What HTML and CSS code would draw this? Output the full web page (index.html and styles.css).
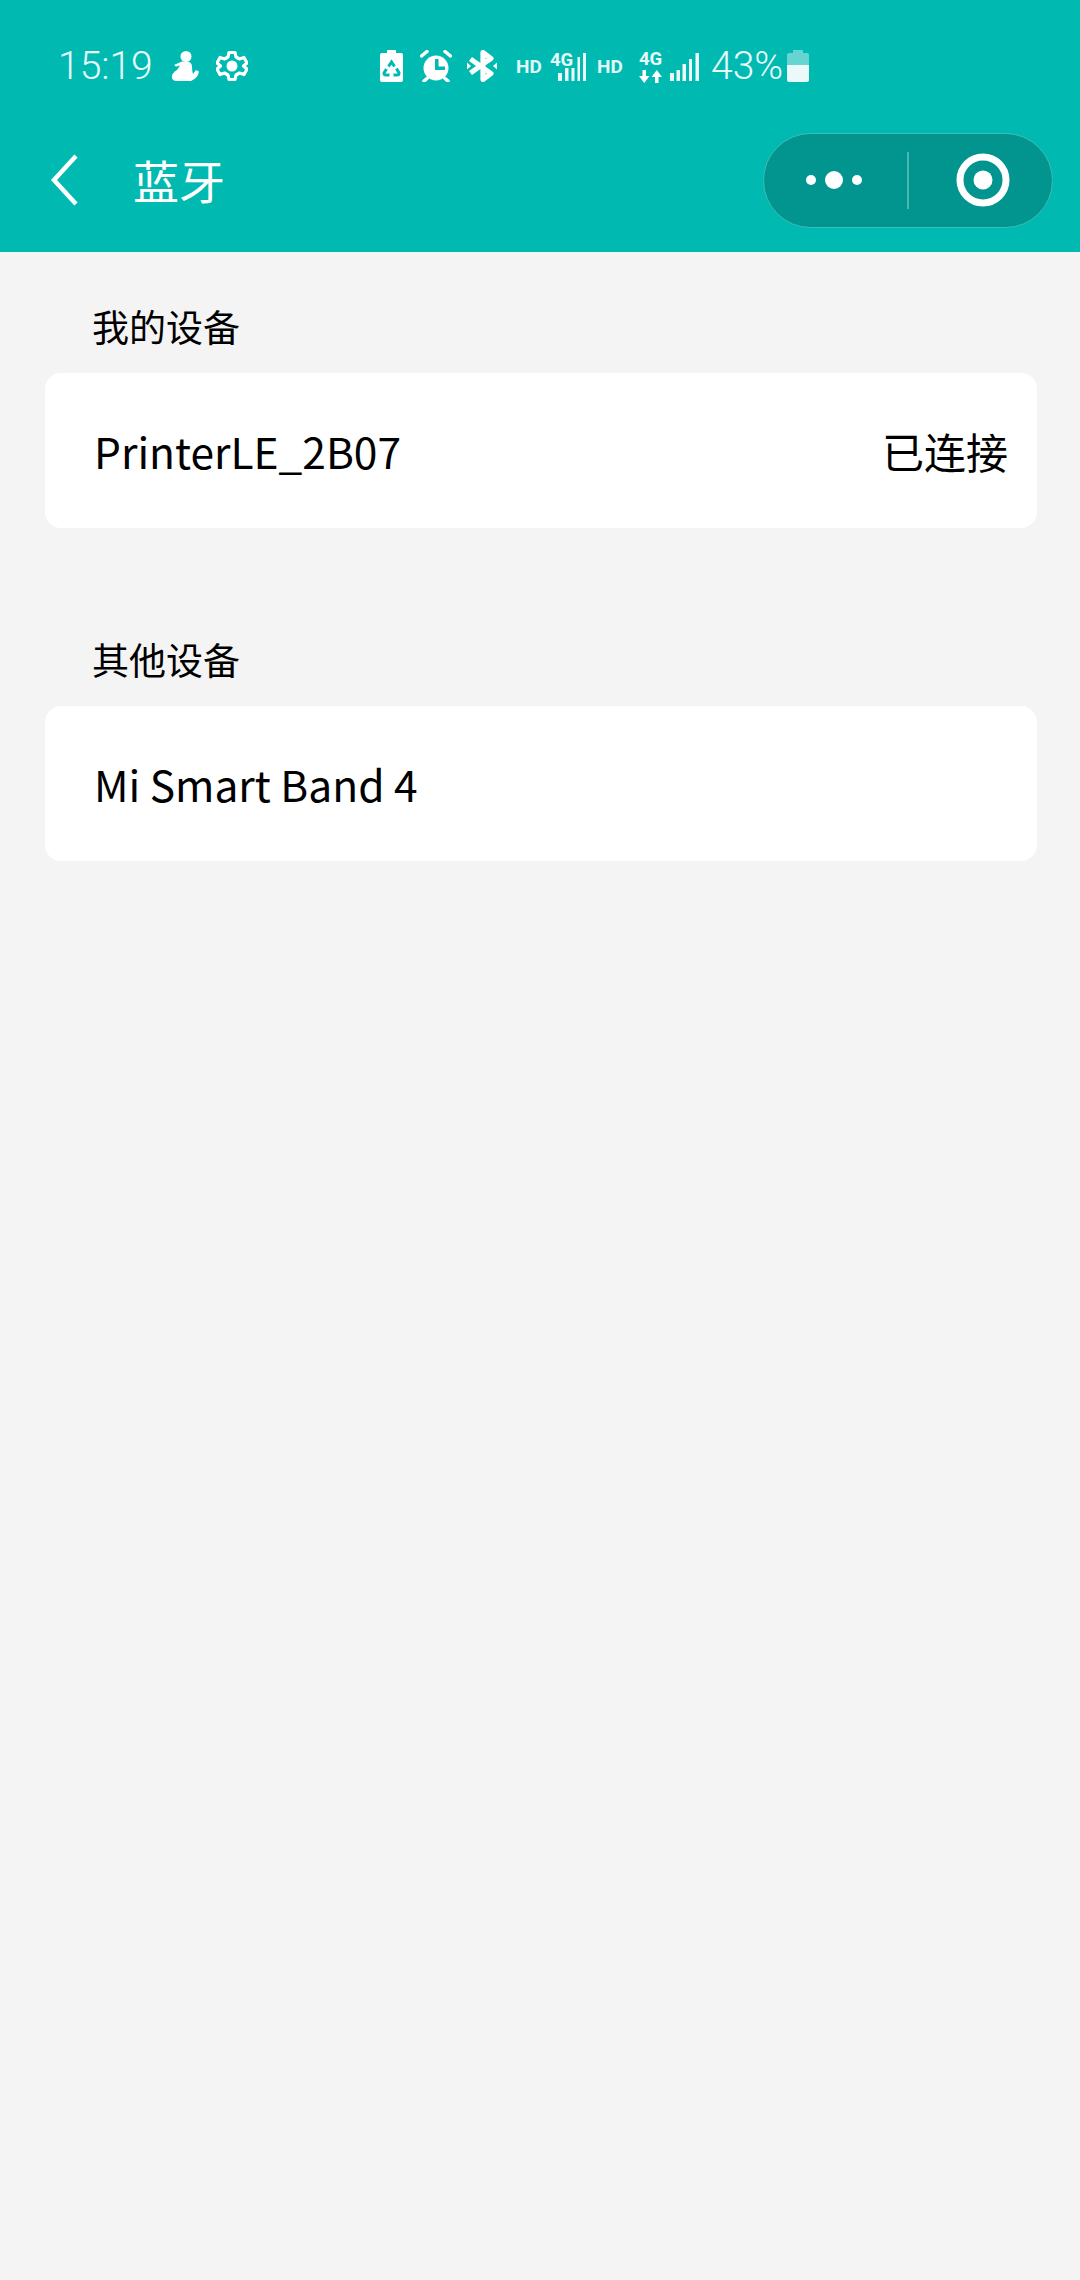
FILE: index.html
```html
<!DOCTYPE html>
<html lang="zh-CN">
<head>
<meta charset="UTF-8" />
<meta name="viewport" content="width=device-width, initial-scale=1.0"/>
<title>蓝牙</title>
<link rel="stylesheet" href="styles.css">
</head>
<body>

<header class="topbar">
  <div class="status">
    <span class="time">15:19</span>
    <!-- meditation figure -->
    <svg class="ic ic-zen" width="28" height="32" viewBox="0 0 28 32">
      <circle cx="15" cy="6.500" r="5.500" fill="#fff"/>
      <path d="M3 15 L11 11.500 L18 12 Q21 13 21 17 Q21 21 22 24 L25 20 L28 21.500 Q27 28 20 31 L6 31 Q0 31 1 25 Q2 22 6 20 L9 15.500 L5 16.500 Z" fill="#fff"/>
    </svg>
    <!-- settings gear -->
    <svg class="ic ic-gear" width="32" height="32" viewBox="0 0 32 32" fill="none" stroke="#fff">
      <path stroke-width="3.200" stroke-linejoin="round" d="M13 2.500 H19 L20 7 L23.500 9 L28 7.500 L31 13 L27.500 16 L31 19 L28 24.500 L23.500 23 L20 25 L19 29.500 H13 L12 25 L8.500 23 L4 24.500 L1 19 L4.500 16 L1 13 L4 7.500 L8.500 9 L12 7 Z"/>
      <circle cx="16" cy="16" r="5.500" fill="#fff" stroke="none"/>
    </svg>

    <!-- battery saver with recycle arrows -->
    <svg class="ic ic-saver" width="23" height="32" viewBox="0 0 23 32">
      <path d="M7 0 H16 V3 H21 Q23 3 23 5 V30 Q23 32 21 32 H2 Q0 32 0 30 V5 Q0 3 2 3 H7 Z" fill="#fff"/>
      <path d="M8.500 16.500 L11.500 12 L14.500 16.500 M16.500 18.500 L19 23 Q19 25 17 25 H13.500 M9.500 25 H6 Q4 25 4 23 L6.500 19" fill="none" stroke="#00bab2" stroke-width="3"/>
    </svg>
    <!-- alarm clock -->
    <svg class="ic ic-alarm" width="32" height="32" viewBox="0 0 32 32">
      <circle cx="16" cy="18" r="12.500" fill="#fff"/>
      <path d="M15 9 H18.500 V16.500 H25 V20 H15 Z" fill="#00bab2"/>
      <path d="M1.500 6 L7 1.500 M30.500 6 L25 1.500 M7.500 28 L4 31 M24.500 28 L28 31" stroke="#fff" stroke-width="3.500" stroke-linecap="round"/>
    </svg>
    <!-- bluetooth -->
    <svg class="ic ic-bt" width="30" height="32" viewBox="0 0 30 32" fill="none">
      <path d="M3.500 9 L24 23.500 L16 29.500 V2.500 L24 8.500 L3.500 23" stroke="#fff" stroke-width="5.200" stroke-linejoin="round"/>
      <path d="M0 12.500 L4 16 L0 19.500 Z M30 12.500 L26 16 L30 19.500 Z" fill="#fff"/>
    </svg>

    <span class="hd hd-first">HD</span>
    <span class="net net-first">
      <span class="net-g">4G</span>
      <svg class="bars" width="28" height="28" viewBox="0 0 28 28">
        <path d="M0 20 H4 V28 H0 Z M7 15 H10.500 V28 H7 Z M13.500 15 H16.500 V28 H13.500 Z M19.500 4 H22 V28 H19.500 Z M25 0 H28 V28 H25 Z" fill="#fff" fill-opacity="0.92"/>
      </svg>
    </span>
    <span class="hd hd-second">HD</span>
    <span class="net net-second">
      <span class="arrows">
        <span class="net-g">4G</span>
        <svg width="23" height="13" viewBox="0 0 23 13">
          <path d="M3.500 0 H7 V6 H10.500 L5.250 13 L0 6 H3.500 Z M16 13 H19.500 V7 H23 L17.750 0 L12.500 7 H16 Z" fill="#fff"/>
        </svg>
      </span>
      <svg class="bars" width="29" height="28" viewBox="0 0 29 28">
        <path d="M0 20 H4 V28 H0 Z M6.500 17 H10 V28 H6.500 Z M12.500 11 H16 V28 H12.500 Z M19 6 H22 V28 H19 Z M25.500 0 H29 V28 H25.500 Z" fill="#fff" fill-opacity="0.92"/>
      </svg>
    </span>
    <span class="pct">43%</span>
    <!-- battery level, upper part dimmed -->
    <svg class="ic ic-batt" width="22" height="32" viewBox="0 0 22 32">
      <path d="M6 0 H16 V3 H20 Q22 3 22 5 V15 H0 V5 Q0 3 2 3 H6 Z" fill="#fff" fill-opacity="0.4"/>
      <path d="M0 15 H22 V30 Q22 32 20 32 H2 Q0 32 0 30 Z" fill="#fff" fill-opacity="0.92"/>
    </svg>
  </div>

  <div class="nav">
    <svg class="back" width="30" height="54" viewBox="0 0 30 54" fill="none">
      <path d="M26 3 L4 27 L26 51" stroke="#fff" stroke-width="4.500"/>
    </svg>
    <h1 class="title">蓝牙</h1>
    <div class="capsule">
      <svg class="more" width="60" height="20" viewBox="0 0 60 20">
        <circle cx="5" cy="10" r="5" fill="#fff"/>
        <circle cx="28" cy="10" r="9" fill="#fff"/>
        <circle cx="51" cy="10" r="5" fill="#fff"/>
      </svg>
      <span class="sep"></span>
      <svg class="close" width="54" height="54" viewBox="0 0 54 54">
        <circle cx="27" cy="27" r="23" fill="none" stroke="#fff" stroke-width="7"/>
        <circle cx="27" cy="27" r="9.500" fill="#fff"/>
      </svg>
    </div>
  </div>
</header>

<main>
  <section class="group">
    <h2 class="group-title">我的设备</h2>
    <div class="device">
      <span class="device-name">PrinterLE_2B07</span>
      <span class="device-state">已连接</span>
    </div>
  </section>

  <section class="group">
    <h2 class="group-title">其他设备</h2>
    <div class="device">
      <span class="device-name">Mi Smart Band 4</span>
    </div>
  </section>
</main>

</body>
</html>
```

FILE: styles.css
```css
html, body {
  margin: 0;
  padding: 0;
}

body {
  width: 1080px;
  height: 2280px;
  overflow: hidden;
  background: #f4f4f4;
  color: #000;
  font-family: "Noto Sans CJK SC", "Noto Sans", sans-serif;
}

.topbar {
  height: 252px;
  background: #00bab2;
  color: #fff;
}

/* status bar */
.status {
  display: flex;
  align-items: center;
  height: 132px;
  padding-left: 58px;
}

.time {
  width: 96px;
  font-family: Roboto, sans-serif;
  font-size: 39px;
  font-weight: 300;
  color: #e8fbfa;
}

.ic {
  flex: none;
}

.ic-zen {
  margin-left: 17px;
}

.ic-gear {
  margin-left: 17px;
}

.ic-saver {
  margin-left: 132px;
}

.ic-alarm {
  margin-left: 17px;
}

.ic-bt {
  margin-left: 15px;
}

.hd {
  flex: none;
  width: 26px;
  font-family: Roboto, sans-serif;
  font-size: 19px;
  font-weight: 700;
  color: #e0f8f7;
}

.hd-first {
  margin-left: 19px;
}

.hd-second {
  margin-left: 11px;
}

.net {
  display: flex;
  align-items: flex-end;
  height: 28px;
  margin-top: 2px;
}

.net-first {
  margin-left: 8px;
}

.net-first .net-g {
  width: 25px;
  margin-right: -17px;
  align-self: flex-start;
}

.net-second {
  margin-left: 16px;
}

.net-g {
  display: block;
  font-family: Roboto, sans-serif;
  font-size: 18.500px;
  font-weight: 700;
  line-height: 15px;
  color: #e8fbfa;
}

.arrows {
  display: flex;
  flex-direction: column;
  align-items: center;
  gap: 3px;
  width: 23px;
  margin-right: 8px;
  margin-bottom: -2px;
}

.arrows svg {
  display: block;
}

.pct {
  margin-left: 12px;
  width: 71px;
  font-family: Roboto, sans-serif;
  font-size: 39px;
  font-weight: 300;
  color: #e8fbfa;
}

.ic-batt {
  margin-left: 5px;
}

/* navigation bar */
.nav {
  display: flex;
  align-items: center;
  height: 96px;
  padding: 0 27px 0 50px;
}

.back {
  flex: none;
}

.title {
  flex: 1;
  margin: -3px 0 0 53px;
  font-size: 46px;
  font-weight: 400;
  line-height: 60px;
}

.capsule {
  display: flex;
  align-items: center;
  box-sizing: border-box;
  width: 290px;
  height: 95px;
  padding-left: 42px;
  background: #02958f;
  border: 1px solid #3fbdb8;
  border-radius: 48px;
}

.sep {
  width: 2px;
  height: 57px;
  margin-left: 41px;
  background: #47b9b4;
}

.close {
  margin-left: 47px;
}

/* device groups */
main {
  padding: 0 43px 0 45px;
}

.group {
  padding-top: 46px;
  margin-bottom: 57px;
}

.group-title {
  margin: 0 0 19px 47px;
  font-size: 37px;
  font-weight: 400;
  line-height: 56px;
}

.device {
  display: flex;
  align-items: center;
  justify-content: space-between;
  height: 155px;
  padding: 0 29px 0 49px;
  background: #fff;
  border-radius: 16px;
}

.device-name {
  font-size: 42.500px;
  line-height: 60px;
}

.device-state {
  font-size: 42px;
  line-height: 60px;
}
```
